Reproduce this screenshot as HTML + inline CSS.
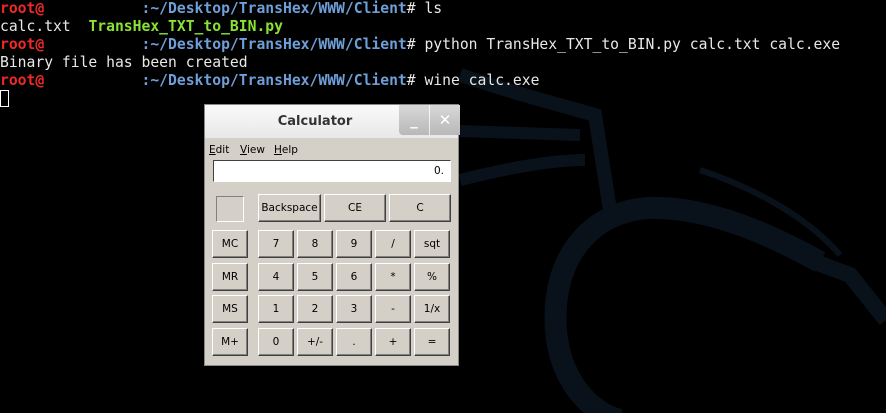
<!DOCTYPE html>
<html><head><style>
body{margin:0;width:886px;height:413px;background:#000;overflow:hidden;position:relative;font-family:"DejaVu Sans Mono",monospace}
.t{position:absolute;left:0;top:0;font-size:14.7px;line-height:18px;color:#e8e8e8;white-space:pre}
.r{color:#ef2929;font-weight:bold}.b{color:#6f9fd8;font-weight:bold}.g{color:#8ae234;font-weight:bold}
.cur{display:inline-block;width:9px;height:17px;border:1px solid #fff;box-sizing:border-box;vertical-align:-3px}
.win{position:absolute;left:204px;top:104px;width:255px;height:262px;background:#d4d0c8;font-family:"DejaVu Sans",sans-serif;font-size:10.5px;color:#000;border:1px solid #888;box-sizing:border-box}
.tb{position:absolute;left:0;top:0;width:253px;height:33px;background:linear-gradient(#fafafa,#e8e8e8);}
.tt{position:absolute;left:0;width:220px;top:9px;text-align:center;font-size:13px;font-weight:bold;color:#333}
.wb{position:absolute;top:0;height:30px;width:30px;background:linear-gradient(#d8d8d8,#b8b8b8);color:#fff;font-weight:bold;text-align:center;line-height:30px;font-size:15px}
.btn{position:absolute;height:28px;background:#d4d0c8;border:1px solid;border-color:#fff #404040 #404040 #fff;box-shadow:inset -1px -1px #808080;box-sizing:border-box;text-align:center;line-height:26px}
.menu span{position:absolute;top:39px}
</style></head><body>
<svg width="886" height="413" style="position:absolute;left:0;top:0">
<g fill="none" stroke="#09121b">
<path d="M556 330 C550 250 600 205 660 208 C720 210 780 240 820 262" stroke-width="22"/>
<path d="M460 75 C520 95 560 105 595 115 L610 210" stroke-width="14"/>
<path d="M460 131 L580 135" stroke-width="12"/>
<path d="M460 180 C520 165 560 160 585 160" stroke-width="12"/>
<path d="M700 170 C760 190 810 220 840 255" stroke-width="6"/>
<path d="M815 262 L850 275 L886 320" stroke-width="16"/>
<path d="M556 330 C560 380 590 413 620 420" stroke-width="22"/>
</g></svg>
<div class="t"><span class="r">root@</span>           <span class="b">:~/Desktop/TransHex/WWW/Client</span># ls
calc.txt  <span class="g">TransHex_TXT_to_BIN.py</span>
<span class="r">root@</span>           <span class="b">:~/Desktop/TransHex/WWW/Client</span># python TransHex_TXT_to_BIN.py calc.txt calc.exe
Binary file has been created
<span class="r">root@</span>           <span class="b">:~/Desktop/TransHex/WWW/Client</span># wine calc.exe
<span class="cur"></span></div>
<div class="win">
<div class="tb"><div class="tt">Calculator</div>
<div class="wb" style="left:194px;border-radius:0 0 0 4px">_</div><div class="wb" style="left:225px">✕</div></div>
<div class="menu"><span style="left:4px"><u>E</u>dit</span><span style="left:35px"><u>V</u>iew</span><span style="left:69px"><u>H</u>elp</span></div>
<div style="position:absolute;left:8px;top:55px;width:238px;height:22px;background:#fff;border:1px solid;border-color:#404040 #fff #fff #404040;box-sizing:border-box;text-align:right;padding-right:6px;line-height:20px">0.</div>
<div style="position:absolute;left:11px;top:91px;width:28px;height:26px;border:1px solid;border-color:#808080 #fff #fff #808080;box-sizing:border-box"></div>
<div class="btn" style="left:53px;top:89px;width:63px">Backspace</div>
<div class="btn" style="left:119px;top:89px;width:62px">CE</div>
<div class="btn" style="left:184px;top:89px;width:62px">C</div>
<div class="btn" style="left:7px;top:125px;width:36px">MC</div>
<div class="btn" style="left:7px;top:158px;width:36px">MR</div>
<div class="btn" style="left:7px;top:190px;width:36px">MS</div>
<div class="btn" style="left:7px;top:223px;width:36px">M+</div>
<div class="btn" style="left:53px;top:125px;width:36px">7</div><div class="btn" style="left:92px;top:125px;width:36px">8</div><div class="btn" style="left:131px;top:125px;width:36px">9</div><div class="btn" style="left:170px;top:125px;width:36px">/</div><div class="btn" style="left:209px;top:125px;width:36px">sqt</div>
<div class="btn" style="left:53px;top:158px;width:36px">4</div><div class="btn" style="left:92px;top:158px;width:36px">5</div><div class="btn" style="left:131px;top:158px;width:36px">6</div><div class="btn" style="left:170px;top:158px;width:36px">*</div><div class="btn" style="left:209px;top:158px;width:36px">%</div>
<div class="btn" style="left:53px;top:190px;width:36px">1</div><div class="btn" style="left:92px;top:190px;width:36px">2</div><div class="btn" style="left:131px;top:190px;width:36px">3</div><div class="btn" style="left:170px;top:190px;width:36px">-</div><div class="btn" style="left:209px;top:190px;width:36px">1/x</div>
<div class="btn" style="left:53px;top:223px;width:36px">0</div><div class="btn" style="left:92px;top:223px;width:36px">+/-</div><div class="btn" style="left:131px;top:223px;width:36px">.</div><div class="btn" style="left:170px;top:223px;width:36px">+</div><div class="btn" style="left:209px;top:223px;width:36px">=</div>
</div>
</body></html>
